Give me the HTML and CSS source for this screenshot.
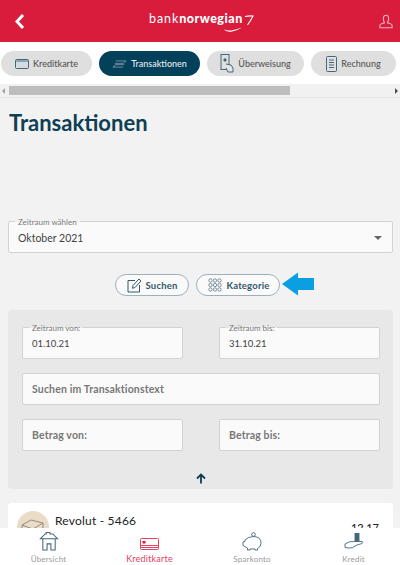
FILE: index.html
```html
<!DOCTYPE html>
<html lang="de">
  <head>
    <title>Transaktionen</title>
    <meta charset="UTF-8" />
    <meta name="viewport" content="width=device-width" />
    <link rel="stylesheet" href="styles.css">
  </head>
  <body>
    <!-- Red top bar -->
    <header class="topbar">
      <svg class="back" width="14" height="18" viewBox="0 0 14 18"><path d="M10 3 L4 9.500 L10 16" fill="none" stroke="#fff" stroke-width="3"/></svg>
      <div class="logo">
        <span class="logo-text">bank<b>norwegian</b></span>
        <svg class="logo-slash" width="10" height="12" viewBox="0 0 10 12"><path d="M1 1.500 Q6 .5 9 1 Q7 5 3.500 10" fill="none" stroke="#fff" stroke-width="1.100"/></svg>
        <svg class="logo-swoosh" width="20" height="8" viewBox="0 0 24 8"><path d="M1 3 Q4 7 10 6 Q17 5 23 1 Q16 3.500 10 4.500 Q5 5 1 3Z" fill="#fff"/></svg>
      </div>
      <svg class="user" width="14" height="15" viewBox="0 0 16 16" fill="none" stroke="#f3b4c0" stroke-width="1.200"><path d="M5 5 C5 1.500 6.500 .8 8 .8 C9.500 .8 11 1.500 11 5 C11 7 10 8.500 9.800 9.500 L14 11 Q15 11.500 15 13 V15.200 H1 V13 Q1 11.500 2 11 L6.200 9.500 C6 8.500 5 7 5 5Z"/></svg>
    </header>

    <!-- Tab pills -->
    <nav class="tabs">
      <a class="tab tab-card">
        <svg width="14" height="10" viewBox="0 0 14 10"><rect x=".5" y=".5" width="13" height="9" rx="1" fill="#d5dcdf" stroke="#44687a"/><rect x="1" y="1" width="12" height="2" fill="#8fa6b2"/></svg>
        Kreditkarte
      </a>
      <a class="tab tab-active">
        <svg width="15" height="8" viewBox="0 0 16 8" fill="none" stroke="#9fb6c1" stroke-width=".7"><path d="M4 .7 H15 L12 3.300 H3"/><path d="M12 7.300 H1 L4 4.700 H13"/></svg>
        Transaktionen
      </a>
      <a class="tab tab-transfer">
        <svg width="14" height="19" viewBox="0 0 14 19" fill="none" stroke="#44687a"><rect x="1" y=".5" width="8" height="15"/><circle cx="5" cy="6" r="1.200" fill="#44687a"/><path d="M6 10 L11 11 L13 14 V18 H8 L6 14" fill="#dfe4e6"/></svg>
        Überweisung
      </a>
      <a class="tab tab-bill">
        <svg width="11" height="16" viewBox="0 0 11 16" fill="none" stroke="#44687a"><rect x=".5" y=".5" width="10" height="15" rx="1"/><path d="M3 4 H8 M3 6.500 H8 M3 9 H8 M3 11.500 H8"/></svg>
        Rechnung
      </a>
    </nav>

    <!-- Tab strip scrollbar -->
    <div class="strip-scroll">
      <span class="strip-arrow strip-left"></span>
      <span class="strip-thumb"></span>
      <span class="strip-arrow strip-right"></span>
    </div>

    <main class="content">
      <h1>Transaktionen</h1>

      <div class="field period">
        <span class="field-label">Zeitraum wählen</span>
        <span class="period-value">Oktober 2021</span>
        <span class="caret"></span>
      </div>

      <div class="actions">
        <button class="action action-search">
          <svg width="15" height="15" viewBox="0 0 15 15" fill="none" stroke="#33586b" stroke-width="1"><path d="M8 2.500 H1 V14 H12.500 V7"/><path d="M5.500 10.300 L6 7.500 L12 1 L14 3 L8 9.500Z"/></svg>
          Suchen
        </button>
        <button class="action action-cat">
          <svg width="14" height="14" viewBox="0 0 14 14" fill="none" stroke="#5d7b8a" stroke-width=".8">
            <circle cx="2.500" cy="2.500" r="1.700"/><circle cx="7" cy="2.500" r="1.700"/><circle cx="11.500" cy="2.500" r="1.700"/>
            <circle cx="2.500" cy="7" r="1.700"/><circle cx="7" cy="7" r="1.700"/><circle cx="11.500" cy="7" r="1.700"/>
            <circle cx="2.500" cy="11.500" r="1.700"/><circle cx="7" cy="11.500" r="1.700"/><circle cx="11.500" cy="11.500" r="1.700"/>
          </svg>
          Kategorie
        </button>
        <svg class="pointer" width="33" height="24" viewBox="0 0 33 24"><path d="M1 12 L17 .5 V6 H33 V18 H17 V23.500Z" fill="#0a9fe3"/></svg>
      </div>

      <!-- Search form -->
      <section class="filter">
        <div class="filter-grid">
          <div class="field box">
            <span class="field-label small">Zeitraum von:</span>
            <span class="box-value">01.10.21</span>
          </div>
          <div class="field box">
            <span class="field-label small">Zeitraum bis:</span>
            <span class="box-value">31.10.21</span>
          </div>
          <div class="field box box-wide"><span class="placeholder">Suchen im Transaktionstext</span></div>
          <div class="field box"><span class="placeholder">Betrag von:</span></div>
          <div class="field box"><span class="placeholder">Betrag bis:</span></div>
        </div>
        <svg class="collapse" width="10" height="11" viewBox="0 0 10 11" fill="none" stroke="#0f3d52" stroke-width="1.800"><path d="M5 10.500 V2 M1 5.500 L5 1.500 L9 5.500"/></svg>
      </section>

      <!-- First transaction, cut off by the bottom menu -->
      <article class="tx">
        <div class="tx-avatar">
          <svg width="24" height="16" viewBox="0 0 24 16" fill="none" stroke="#7b7b70" stroke-width=".8"><path d="M1 6 L10 1 L22 4 V9 L12 15 L1 11Z M1 6 L12 10 L22 4 M12 10 V15"/></svg>
        </div>
        <div class="tx-name">Revolut - 5466</div>
        <div class="tx-amount">12,17</div>
      </article>
    </main>

    <!-- Bottom menu -->
    <footer class="bottom-nav">
      <a class="bottom-item">
        <svg width="20" height="19" viewBox="0 0 20 20" fill="none" stroke="#44687a" stroke-width="1.100"><path d="M1 7 L6 2 H7 V.5 H11 V2 H14 L19 7 Z"/><path d="M3.500 7 V19 H8 V12.500 H12 V19 H16.500 V7"/></svg>
        <span>Übersicht</span>
      </a>
      <a class="bottom-item bottom-active">
        <svg width="20" height="13" viewBox="0 0 20 13" fill="none" stroke="#e8405f" stroke-width="1"><rect x=".5" y=".5" width="18" height="11" rx="1"/><path d="M1 7.500 H18 M1 9.500 H18"/><rect x="2.500" y="3" width="3" height="2.500" fill="#d91c3c" stroke="none"/></svg>
        <span>Kreditkarte</span>
      </a>
      <a class="bottom-item">
        <svg width="20" height="19" viewBox="0 0 20 19" fill="none" stroke="#44687a" stroke-width=".9"><circle cx="11.500" cy="2.500" r="1.800"/><path d="M3 8 Q6 4.500 12 4.500 Q19 5 19 11 Q19 15 15.500 16.500 V18 H13 V17 H8 V18 H5.500 V16 L1 13.500 V10 L3 9.500Z"/></svg>
        <span>Sparkonto</span>
      </a>
      <a class="bottom-item">
        <svg width="20" height="18" viewBox="0 0 20 18" fill="none" stroke="#44687a" stroke-width=".9"><rect x="11" y=".5" width="4" height="8" fill="#44687a"/><path d="M1 11 Q5 8 10 8.500 H18 Q20 9 18 10.500 L13 12 Q8 16 4 15 L1 14.500Z" fill="#fff"/></svg>
        <span>Kredit</span>
      </a>
    </footer>
  </body>
</html>
```

FILE: styles.css
```css
* {
  box-sizing: border-box;
}

html,
body {
  height: 565px;
  overflow: hidden;
}

body {
  margin: 0;
  background-color: #f2f2f2;
  color: #444;
  font-family: Lato, "Noto Sans", sans-serif;
}

/* Top bar */
.topbar {
  position: relative;
  display: flex;
  align-items: center;
  justify-content: space-between;
  height: 42px;
  padding: 0 7px 0 13px;
  background-color: #d91c3c;
}

.back {
  margin-top: -1px;
}

.logo {
  position: absolute;
  top: 12px;
  left: 149px;
  width: 106px;
  height: 24px;
  color: #fff;
}

.logo-text {
  display: block;
  font-size: 12.500px;
  line-height: 14px;
  letter-spacing: 0.9px;
}

.logo-text b {
  font-weight: 900;
  letter-spacing: 0.5px;
}

.logo-slash {
  position: absolute;
  top: 3px;
  right: 1px;
}

.logo-swoosh {
  position: absolute;
  top: 14px;
  left: 74px;
}

/* Tabs */
.tabs {
  display: flex;
  gap: 7px;
  height: 42px;
  padding: 9px 0 0 1px;
  background-color: #fff;
}

.tab {
  display: flex;
  align-items: center;
  justify-content: center;
  gap: 4px;
  height: 25px;
  border-radius: 13px;
  background-color: #dfdfdf;
  color: #555;
  font-size: 9px;
  font-weight: 500;
}

.tab-card {
  width: 91px;
}

.tab-active {
  width: 101px;
  background-color: #03405a;
  color: #e4ecef;
}

.tab-transfer {
  width: 97px;
}

.tab-bill {
  width: 85px;
}

.strip-scroll {
  display: flex;
  align-items: center;
  height: 13px;
  background-color: #f1f1f1;
}

.strip-thumb {
  width: 281px;
  height: 9px;
  margin-left: 4px;
  background-color: #bdbdbd;
}

.strip-arrow {
  width: 0;
  height: 0;
  border-top: 3px solid transparent;
  border-bottom: 3px solid transparent;
}

.strip-left {
  margin-left: 2px;
  border-right: 3px solid #a3a3a3;
}

.strip-right {
  margin-left: auto;
  margin-right: 2px;
  border-left: 3px solid #505050;
}

/* Page content */
.content {
  padding: 0 7px 0 8px;
  border-top: 1px solid #e6e6e6;
}

h1 {
  margin: 0;
  padding-top: 11px;
  height: 123px;
  color: #0e3f55;
  font-size: 22px;
  line-height: 28px;
  font-weight: 700;
  padding-left: 1px;
}

.field {
  position: relative;
  border: 1px solid #d2d2d2;
  border-radius: 2px;
  background-color: #fafafa;
}

.field-label {
  position: absolute;
  top: -5px;
  left: 6px;
  padding: 0 3px;
  background: linear-gradient(#f2f2f2 50%, #fafafa 50%);
  color: #777;
  font-size: 8px;
  line-height: 10px;
}

.field-label.small {
  left: 6px;
  padding: 0 3px;
  background: linear-gradient(#e8e8e8 50%, #fafafa 50%);
}

.period {
  display: flex;
  align-items: center;
  justify-content: space-between;
  height: 32px;
  padding: 1px 10px 0 9px;
  font-size: 10.500px;
}

.caret {
  width: 0;
  height: 0;
  border-left: 4px solid transparent;
  border-right: 4px solid transparent;
  border-top: 4px solid #666;
}

/* Search / category buttons */
.actions {
  position: relative;
  display: flex;
  justify-content: center;
  gap: 7px;
  padding: 21px 7px 14px 0;
}

.action {
  display: flex;
  align-items: center;
  height: 22px;
  border: 1px solid #9db1bb;
  border-radius: 11px;
  background-color: #fafafa;
  color: #33586b;
  font-family: inherit;
  font-size: 9.500px;
  font-weight: 700;
  letter-spacing: 0.2px;
  padding: 0;
}

.action-search {
  width: 74px;
  gap: 4px;
  padding-left: 11px;
}

.action-cat {
  width: 84px;
  gap: 5px;
  padding-left: 11px;
}

.pointer {
  position: absolute;
  top: 19px;
  left: 273px;
}

/* Search form panel */
.filter {
  display: flex;
  flex-direction: column;
  align-items: center;
  height: 179px;
  padding: 17px 13px 0 14px;
  border-radius: 4px;
  background-color: #e8e8e8;
}

.filter-grid {
  display: grid;
  grid-template-columns: 161px 161px;
  justify-content: space-between;
  gap: 14px 36px;
  width: 358px;
}

.box {
  display: flex;
  align-items: center;
  height: 32px;
  padding-left: 9px;
  font-size: 10.500px;
}

.box-wide {
  grid-column: 1 / 3;
}

.box-value {
  font-size: 9.500px;
  padding-top: 1px;
}

.placeholder {
  color: #777;
  font-weight: 700;
  letter-spacing: 0.15px;
}

.collapse {
  margin-top: 22px;
}

/* Transaction card */
.tx {
  position: relative;
  display: flex;
  gap: 6px;
  height: 60px;
  margin-top: 14px;
  padding: 8px 14px 0 9px;
  border-radius: 4px;
  background-color: #fff;
}

.tx-avatar {
  display: flex;
  align-items: center;
  justify-content: center;
  width: 32px;
  height: 32px;
  border-radius: 50%;
  background-color: #ebdcc8;
}

.tx-name {
  padding-top: 3px;
  color: #222;
  font-size: 12px;
  line-height: 14px;
  letter-spacing: 0.2px;
}

.tx-amount {
  margin-left: auto;
  padding-top: 10px;
  color: #222;
  font-size: 11px;
  font-weight: 500;
}

/* Bottom menu */
.bottom-nav {
  position: fixed;
  left: 0;
  right: 0;
  bottom: 0;
  display: grid;
  grid-template-columns: 97px 105px 100px 98px;
  height: 37px;
  background-color: #fff;
}

.bottom-item {
  display: flex;
  flex-direction: column;
  align-items: center;
  justify-content: flex-end;
  padding-bottom: 1px;
  color: #9a9a9a;
  font-size: 8px;
  line-height: 10px;
  letter-spacing: 0.2px;
}

.bottom-item:last-child {
  padding-left: 5px;
}

.bottom-item span {
  margin-top: 3px;
}

.bottom-active {
  color: #e8405f;
  font-size: 9px;
}
```
